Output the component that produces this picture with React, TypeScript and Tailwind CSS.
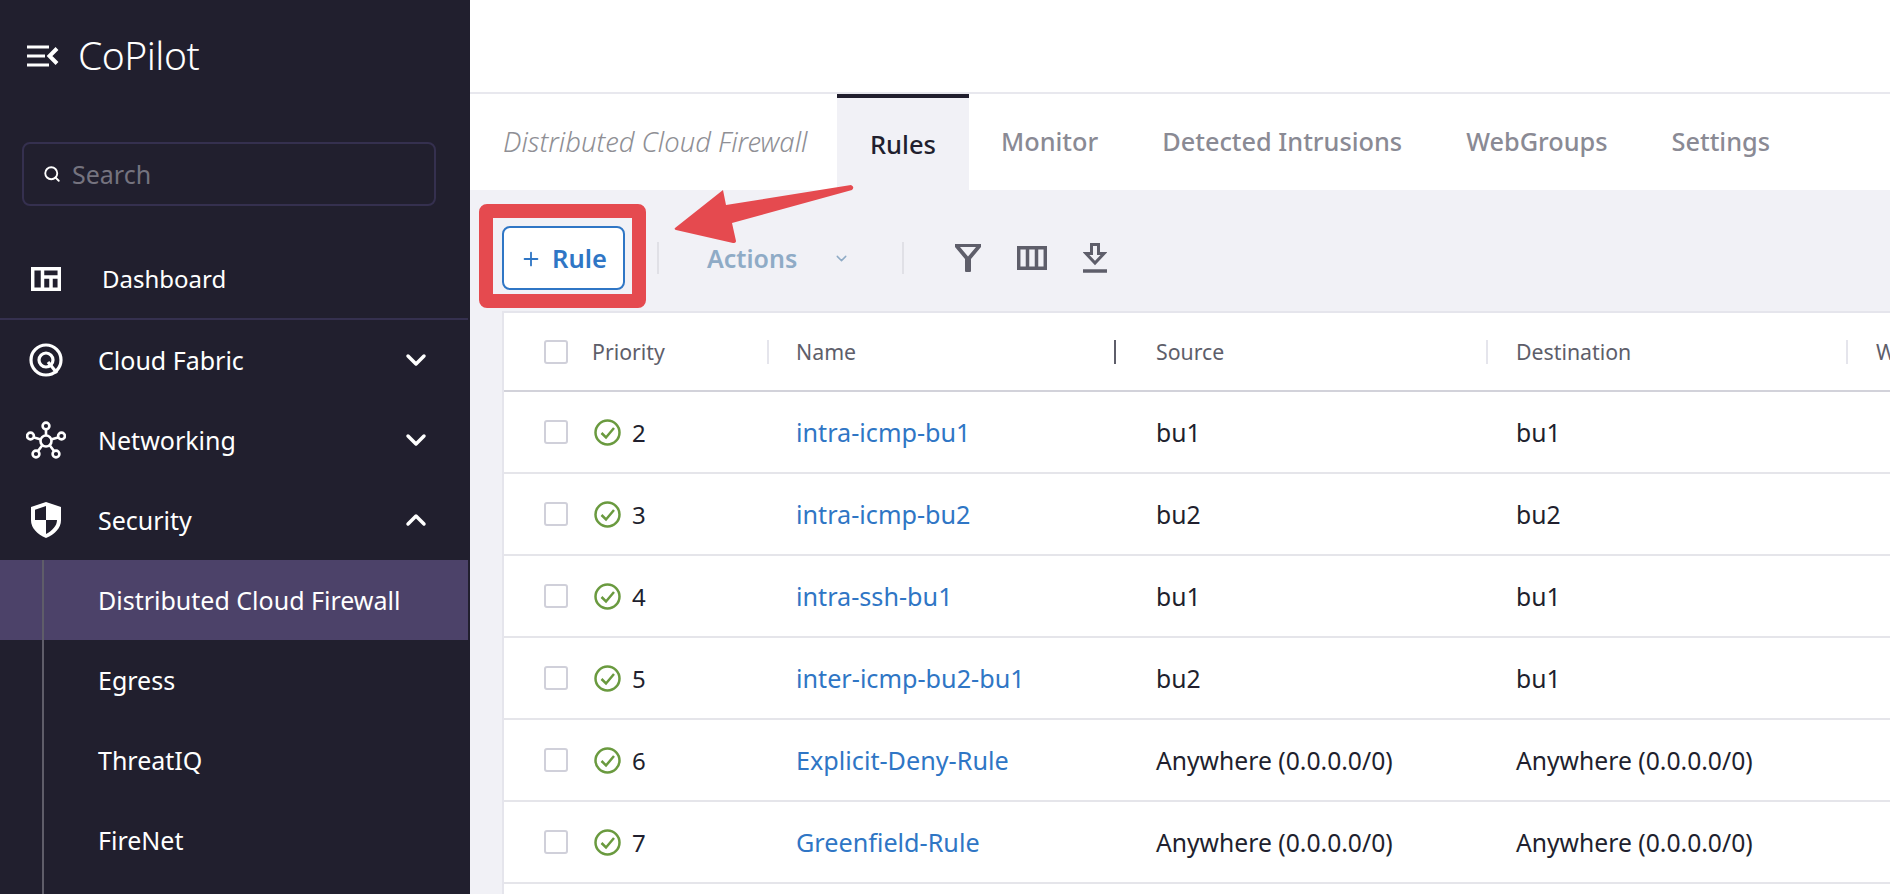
import React from "react";
import { ChevronDown, ChevronUp, Plus, Search } from "lucide-react";

const font = { fontFamily: '"Noto Sans", sans-serif' };

const MenuCollapseIcon = () => (
  <svg width="32" height="22" viewBox="0 0 32 22" className="text-white" fill="none">
    <path d="M0 2h22M0 11h18M0 20h22" stroke="currentColor" strokeWidth="3" />
    <path d="M30 3.500 22.500 11 30 18.500" stroke="currentColor" strokeWidth="4" />
  </svg>
);

const DashboardIcon = () => (
  <svg width="30" height="24" viewBox="0 0 30 24" fill="none" stroke="white" strokeWidth="3.500">
    <path d="M1.700 1.700h26.600v20.600H1.700zM11.500 1.700v20.600M11.500 10h16.800M20 10v12.300" />
  </svg>
);

const CloudFabricIcon = () => (
  <svg width="34" height="34" viewBox="0 0 34 34" fill="none" stroke="white" strokeWidth="3.200">
    <circle cx="17" cy="17" r="15" />
    <circle cx="17" cy="17" r="7" />
    <path d="m19 19 9 11" />
  </svg>
);

const NetworkingIcon = () => (
  <svg width="40" height="38" viewBox="0 0 40 38" fill="none" stroke="white" strokeWidth="2.600">
    <circle cx="20" cy="20" r="5.500" />
    <circle cx="20" cy="5" r="3.400" />
    <circle cx="4.500" cy="15" r="3.400" />
    <circle cx="35.500" cy="15" r="3.400" />
    <circle cx="10" cy="33" r="3.400" />
    <circle cx="30" cy="33" r="3.400" />
    <path d="M20 8.500v6M8 16.500l7 2M32 16.500l-7 2M12 30l4.500-6M28 30l-4.500-6" />
  </svg>
);

const ShieldIcon = () => (
  <svg width="30" height="36" viewBox="0 0 30 36">
    <path d="M15 0 30 5v13c0 8-6 14-15 18C6 32 0 26 0 18V5z" fill="white" />
    <path d="M15 4 4 7.700V18h11zM15 18h11c0 5.800-4.500 10.500-11 14z" fill="#211f2e" />
  </svg>
);

const CheckCircle = () => (
  <svg width="27" height="27" viewBox="0 0 27 27" fill="none" stroke="#6a9a3f" strokeWidth="2.500">
    <circle cx="13.500" cy="13.500" r="12" />
    <path d="m7.500 14 4.500 4.500 8-9.500" />
  </svg>
);

const FilterIcon = () => (
  <svg width="26" height="28" viewBox="0 0 26 28" fill="#5e5e6a">
    <path d="M0 0h26v3L16 15v12a1 1 0 0 1-1 1h-4a1 1 0 0 1-1-1V15L0 3zM5 3l8 9.500L21 3z" fillRule="evenodd" />
  </svg>
);

const ColumnsIcon = () => (
  <svg width="30" height="24" viewBox="0 0 30 24" fill="none" stroke="#5e5e6a" strokeWidth="3.500">
    <path d="M1.700 1.700h26.600v20.600H1.700zM10.500 1.700v20.600M19.500 1.700v20.600" />
  </svg>
);

const DownloadIcon = () => (
  <svg width="24" height="30" viewBox="0 0 24 30" fill="none">
    <path d="M8.500 1.500h7v9h5.500L12 20 3 10.500h5.500z" stroke="#5e5e6a" strokeWidth="3" />
    <path d="M0 28h24" stroke="#5e5e6a" strokeWidth="3.500" />
  </svg>
);

const navMain = [
  { label: "Cloud Fabric", icon: <CloudFabricIcon />, open: false },
  { label: "Networking", icon: <NetworkingIcon />, open: false },
  { label: "Security", icon: <ShieldIcon />, open: true },
];

const subItems = ["Distributed Cloud Firewall", "Egress", "ThreatIQ", "FireNet", ""];

const tabs = ["Monitor", "Detected Intrusions", "WebGroups", "Settings"];

const rules = [
  { priority: 2, name: "intra-icmp-bu1", source: "bu1", destination: "bu1" },
  { priority: 3, name: "intra-icmp-bu2", source: "bu2", destination: "bu2" },
  { priority: 4, name: "intra-ssh-bu1", source: "bu1", destination: "bu1" },
  { priority: 5, name: "inter-icmp-bu2-bu1", source: "bu2", destination: "bu1" },
  { priority: 6, name: "Explicit-Deny-Rule", source: "Anywhere (0.0.0.0/0)", destination: "Anywhere (0.0.0.0/0)" },
  { priority: 7, name: "Greenfield-Rule", source: "Anywhere (0.0.0.0/0)", destination: "Anywhere (0.0.0.0/0)" },
];

const Checkbox = () => (
  <div className="w-6 h-6 border-2 border-[#d0d0da] rounded-[3px] bg-white" />
);

const Sidebar = () => (
  <aside className="w-[470px] shrink-0 h-full bg-[#211f2e] text-white overflow-hidden">
    <div className="h-[112px] flex items-center pl-[27px] gap-[19px]">
      <MenuCollapseIcon />
      <span className="text-[39px] font-light leading-none tracking-[-0.5px] -mt-[3px]">CoPilot</span>
    </div>
    <div className="mt-[30px] ml-[22px] w-[414px] h-[64px] border-2 border-[#35304f] rounded-lg flex items-center pl-[19px] gap-[11px]">
      <Search size={18} strokeWidth={2.500} />
      <span className="text-[25px] text-[#75737f] pt-[1px]">Search</span>
    </div>
    <div className="w-[468px] h-[114px] pt-[34px] border-b-2 border-[#35304f] flex items-center pl-[31px]">
      <DashboardIcon />
      <span className="ml-[41px] text-[24px]">Dashboard</span>
    </div>
    <nav className="w-[468px]">
      {navMain.map((item) => (
        <div key={item.label} className="h-[80px] flex items-center">
          <div className="w-[92px] h-[40px] pr-[1px] flex items-center justify-center">{item.icon}</div>
          <span className="ml-[6px] pt-[2px] text-[25px] flex-1">{item.label}</span>
          {item.open ? (
            <ChevronUp size={32} strokeWidth={2.600} className="mr-[36px]" />
          ) : (
            <ChevronDown size={32} strokeWidth={2.600} className="mr-[36px]" />
          )}
        </div>
      ))}
      {subItems.map((label, i) => (
        <div key={i} className={`h-[80px] flex items-center ${i === 0 ? "bg-[#4c4269]" : ""}`}>
          <div className="ml-[42px] w-[2px] h-full bg-[#5f5d69]" />
          <span className="ml-[54px] pt-[2px] text-[25px]">{label}</span>
        </div>
      ))}
    </nav>
  </aside>
);

const TabBar = () => (
  <div className="h-[98px] flex mt-[92px] border-t-2 border-[#e8e8ee] bg-white shrink-0">
    <div className="w-[367px] pl-[33px] flex items-center whitespace-nowrap text-[27.400px] italic font-light text-[#8f8f95]">
      Distributed Cloud Firewall
    </div>
    <div className="w-[132px] bg-[#f1f1f6] border-t-4 border-[#211f2e] flex items-center justify-center text-[25.500px] font-medium text-[#211f2e]">
      Rules
    </div>
    <div className="flex items-center pl-[32px] gap-[64px] text-[25.300px] font-medium text-[#8a8a94]">
      {tabs.map((t) => (
        <span key={t}>{t}</span>
      ))}
    </div>
  </div>
);

const Toolbar = () => (
  <div className="h-[121px] shrink-0 flex items-start pt-[36px] pl-[32px] relative">
    <div className="relative">
      <div className="absolute -left-[23px] -top-[22px] -right-[21px] -bottom-[18px] border-[14px] border-[#e54a4f] rounded-lg" />
      <button className="w-[123px] h-[64px] pt-[1px] bg-white border-2 border-[#2f76c5] rounded-lg flex items-center justify-center gap-[10px] text-[#2f76c5] text-[25.500px] font-semibold">
        <Plus size={22} strokeWidth={2} />
        Rule
      </button>
    </div>
    <div className="ml-[32px] mt-[16px] w-[2px] h-[32px] bg-[#e0e0e6]" />
    <div className="ml-[48px] pt-[2px] h-[64px] flex items-center text-[25px] font-semibold text-[#8fabc6]">Actions</div>
    <ChevronDown size={17} strokeWidth={2} className="ml-[36px] mt-[24px] text-[#8fabc6]" />
    <div className="ml-[52px] mt-[16px] w-[2px] h-[32px] bg-[#e0e0e6]" />
    <div className="ml-[51px] h-[64px] flex items-center gap-[36px]">
      <FilterIcon />
      <ColumnsIcon />
      <DownloadIcon />
    </div>
  </div>
);

const gridCols = "grid grid-cols-[88px_177px_347px_372px_360px_1fr]";

const RuleTable = () => (
  <div className="flex-1 ml-[32px] bg-white border-t-2 border-l-2 border-[#e5e5ec]">
    <div className={`${gridCols} h-[79px] items-center border-b-2 border-[#d2d2da] text-[21.300px] text-[#5e5e6a]`}>
      <div className="pl-[40px]">
        <Checkbox />
      </div>
      <div className="h-6 flex items-center border-r-2 border-[#e5e5ec]">Priority</div>
      <div className="pl-[27px] h-6 flex items-center border-r-2 border-[#5e5e6a]">Name</div>
      <div className="pl-[40px] h-6 flex items-center border-r-2 border-[#e5e5ec]">Source</div>
      <div className="pl-[28px] h-6 flex items-center border-r-2 border-[#e5e5ec] whitespace-nowrap">Destination</div>
      <div className="pl-[28px] h-6 flex items-center overflow-hidden">W</div>
    </div>
    {rules.map((r) => (
      <div key={r.priority} className={`${gridCols} h-[82px] items-center border-b-2 border-[#e5e5ea] text-[24px] text-[#211f2e]`}>
        <div className="pl-[40px]">
          <Checkbox />
        </div>
        <div className="flex items-center gap-[11px] pl-[2px] pt-[1px]">
          <CheckCircle />
          {r.priority}
        </div>
        <div className="pl-[27px] pt-[1px] text-[25.200px] text-[#2f76c5] whitespace-nowrap">{r.name}</div>
        <div className="pl-[40px] pt-[1px] text-[24.700px] whitespace-nowrap">{r.source}</div>
        <div className="pl-[28px] pt-[1px] text-[24.700px] whitespace-nowrap">{r.destination}</div>
      </div>
    ))}
  </div>
);

const App = () => (
  <div className="relative flex w-[1890px] h-[894px] overflow-hidden bg-white" style={font}>
    <Sidebar />
    <main className="flex-1 min-w-0 flex flex-col bg-[#f1f1f6]">
      <div className="bg-white">
        <TabBar />
      </div>
      <Toolbar />
      <RuleTable />
    </main>
    {/* annotation arrow */}
    <svg className="absolute left-[670px] top-[180px]" width="190" height="70" viewBox="670 180 190 70">
      <path
        d="M675 228 723 190 726 205 851 185Q855 187 852 190L732 223 736 241Q736 243 733 243L676 230Q674 229 675 228Z"
        fill="#e54a4f"
      />
    </svg>
  </div>
);

export default App;
